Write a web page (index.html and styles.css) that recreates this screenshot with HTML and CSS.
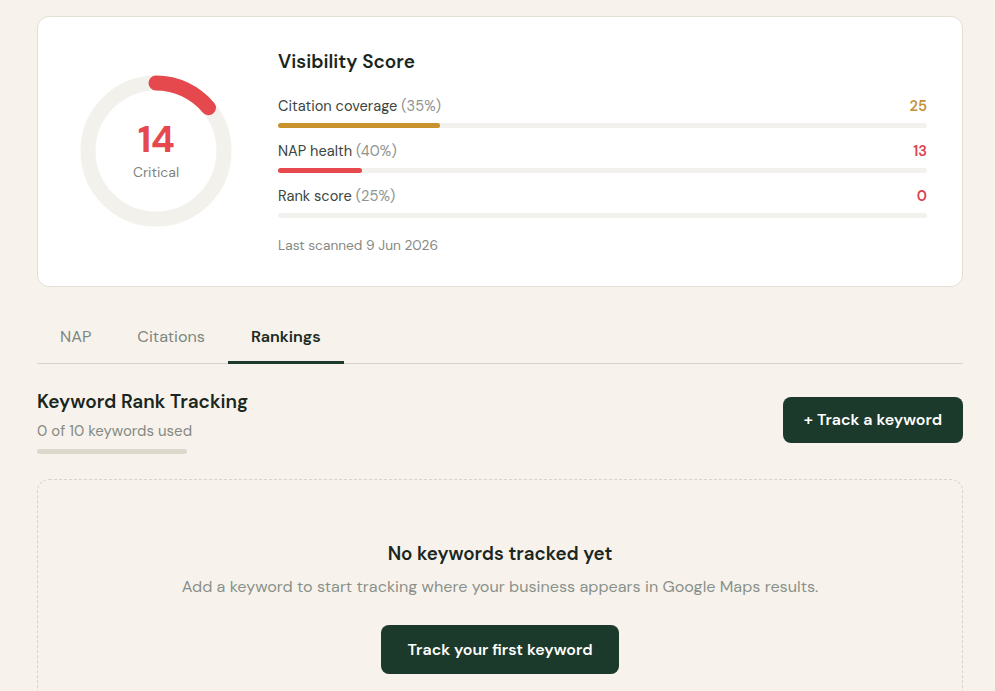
FILE: index.html
```html
<!DOCTYPE html>
<html lang="en">
<head>
  <meta charset="UTF-8">
  <title>Visibility</title>
  <link rel="stylesheet" href="styles.css">
</head>
<body>
  <div class="page">
    <div class="score-card">
      <div class="gauge">
        <svg width="152" height="152" viewBox="0 0 152 152">
          <circle cx="76" cy="76" r="68" fill="none" stroke="#f2f1ec" stroke-width="15"/>
          <circle cx="76" cy="76" r="68" fill="none" stroke="#e5484d" stroke-width="15"
            stroke-linecap="round" stroke-dasharray="59.8 427.3" transform="rotate(-90 76 76)"/>
        </svg>
        <div class="gauge-text">
          <div class="gauge-num">14</div>
          <div class="gauge-label">Critical</div>
        </div>
      </div>
      <div class="score-info">
        <h2>Visibility Score</h2>
        <div class="metric">
          <div class="metric-row">
            <span>Citation coverage <em>(35%)</em></span>
            <b class="gold">25</b>
          </div>
          <div class="bar"><div class="fill gold-bg" style="width: 25%"></div></div>
        </div>
        <div class="metric">
          <div class="metric-row">
            <span>NAP health <em>(40%)</em></span>
            <b class="red">13</b>
          </div>
          <div class="bar"><div class="fill red-bg" style="width: 13%"></div></div>
        </div>
        <div class="metric">
          <div class="metric-row">
            <span>Rank score <em>(25%)</em></span>
            <b class="red">0</b>
          </div>
          <div class="bar"><div class="fill red-bg" style="width: 0%"></div></div>
        </div>
        <p class="scanned">Last scanned 9 Jun 2026</p>
      </div>
    </div>

    <div class="tabs">
      <div class="tab">NAP</div>
      <div class="tab">Citations</div>
      <div class="tab active">Rankings</div>
    </div>

    <div class="section-head">
      <div>
        <h3>Keyword Rank Tracking</h3>
        <p class="usage">0 of 10 keywords used</p>
        <div class="usage-bar"></div>
      </div>
      <button class="btn btn-head">+ Track a keyword</button>
    </div>

    <div class="empty">
      <h4>No keywords tracked yet</h4>
      <p>Add a keyword to start tracking where your business appears in Google Maps results.</p>
      <button class="btn btn-lg">Track your first keyword</button>
    </div>
  </div>
</body>
</html>
```

FILE: styles.css
```css
* {
  box-sizing: border-box;
  margin: 0;
  padding: 0;
  font-family: "DM Sans", Inter, "Noto Sans", sans-serif;
}
body {
  background: #f7f3ec;
  color: #1c2a22;
}
.page {
  width: 926px;
  margin-left: 37px;
  padding-top: 16px;
}
.score-card {
  background: white;
  border: 1px solid #e3dfd4;
  border-radius: 12px;
  height: 271px;
  display: flex;
  align-items: flex-start;
  padding: 58px 35px 0 42px;
}
.gauge {
  position: relative;
  width: 152px;
  height: 152px;
  flex: none;
}
.gauge svg {
  display: block;
}
.gauge-text {
  position: absolute;
  inset: 0;
  display: flex;
  flex-direction: column;
  align-items: center;
  justify-content: center;
  padding-bottom: 3px;
}
.gauge-num {
  font-size: 37px;
  font-weight: 700;
  color: #e5484d;
  line-height: 40px;
  letter-spacing: -0.5px;
}
.gauge-label {
  font-size: 14px;
  color: #7f857f;
  margin-top: 4px;
}
.score-info {
  flex: 1;
  margin-left: 46px;
  margin-top: -26px;
}
.score-info h2 {
  font-size: 19px;
  font-weight: 600;
  color: #1a2620;
  margin-bottom: 22px;
}
.metric {
  margin-bottom: 13px;
}
.metric-row {
  display: flex;
  justify-content: space-between;
  font-size: 14.6px;
  color: #3c4540;
  height: 20px;
  align-items: center;
}
.metric-row em {
  font-style: normal;
  color: #8f948f;
}
.metric-row b {
  font-weight: 600;
  font-size: 14.6px;
}
.gold { color: #c39239; }
.red { color: #d9434f; }
.bar {
  height: 5px;
  background: #f2f1ed;
  border-radius: 3px;
  margin-top: 7px;
}
.fill {
  height: 100%;
  border-radius: 3px;
}
.gold-bg { background: #c8922d; }
.red-bg { background: #e5484d; }
.scanned {
  font-size: 13.7px;
  color: #858a85;
  margin-top: 18px;
}
.tabs {
  display: flex;
  border-bottom: 1px solid #d6d3cb;
  margin-top: 30px;
}
.tab {
  padding: 9px 23px 15px;
  font-size: 16.2px;
  color: #7b877f;
  border-bottom: 2px solid transparent;
  margin-bottom: -1px;
}
.tab.active {
  color: #1c2a22;
  font-weight: 600;
  border-bottom: 3px solid #1d3a2c;
  padding-bottom: 14px;
}
.section-head {
  display: flex;
  justify-content: space-between;
  align-items: center;
  margin-top: 25px;
}
.section-head h3 {
  font-size: 19px;
  font-weight: 600;
  color: #1a2620;
}
.usage {
  font-size: 15px;
  color: #858a85;
  margin-top: 7px;
}
.usage-bar {
  width: 150px;
  height: 5px;
  background: #dcd8cc;
  border-radius: 3px;
  margin-top: 8px;
}
.btn {
  background: #1b3a2c;
  color: white;
  border: none;
  border-radius: 8px;
  font-size: 16px;
  font-weight: 600;
  height: 46px;
  padding: 0 21px;
  cursor: pointer;
}
.btn-head {
  margin-bottom: 4px;
}
.empty {
  margin-top: 25px;
  border: 1px dashed #d8d4ca;
  border-radius: 12px;
  height: 240px;
  text-align: center;
  padding-top: 61px;
}
.empty h4 {
  font-size: 18.8px;
  font-weight: 600;
  color: #1a2620;
}
.empty p {
  font-size: 16.2px;
  color: #8a918b;
  margin-top: 10px;
}
.btn-lg {
  height: 49px;
  width: 238px;
  margin-top: 28px;
}
```
